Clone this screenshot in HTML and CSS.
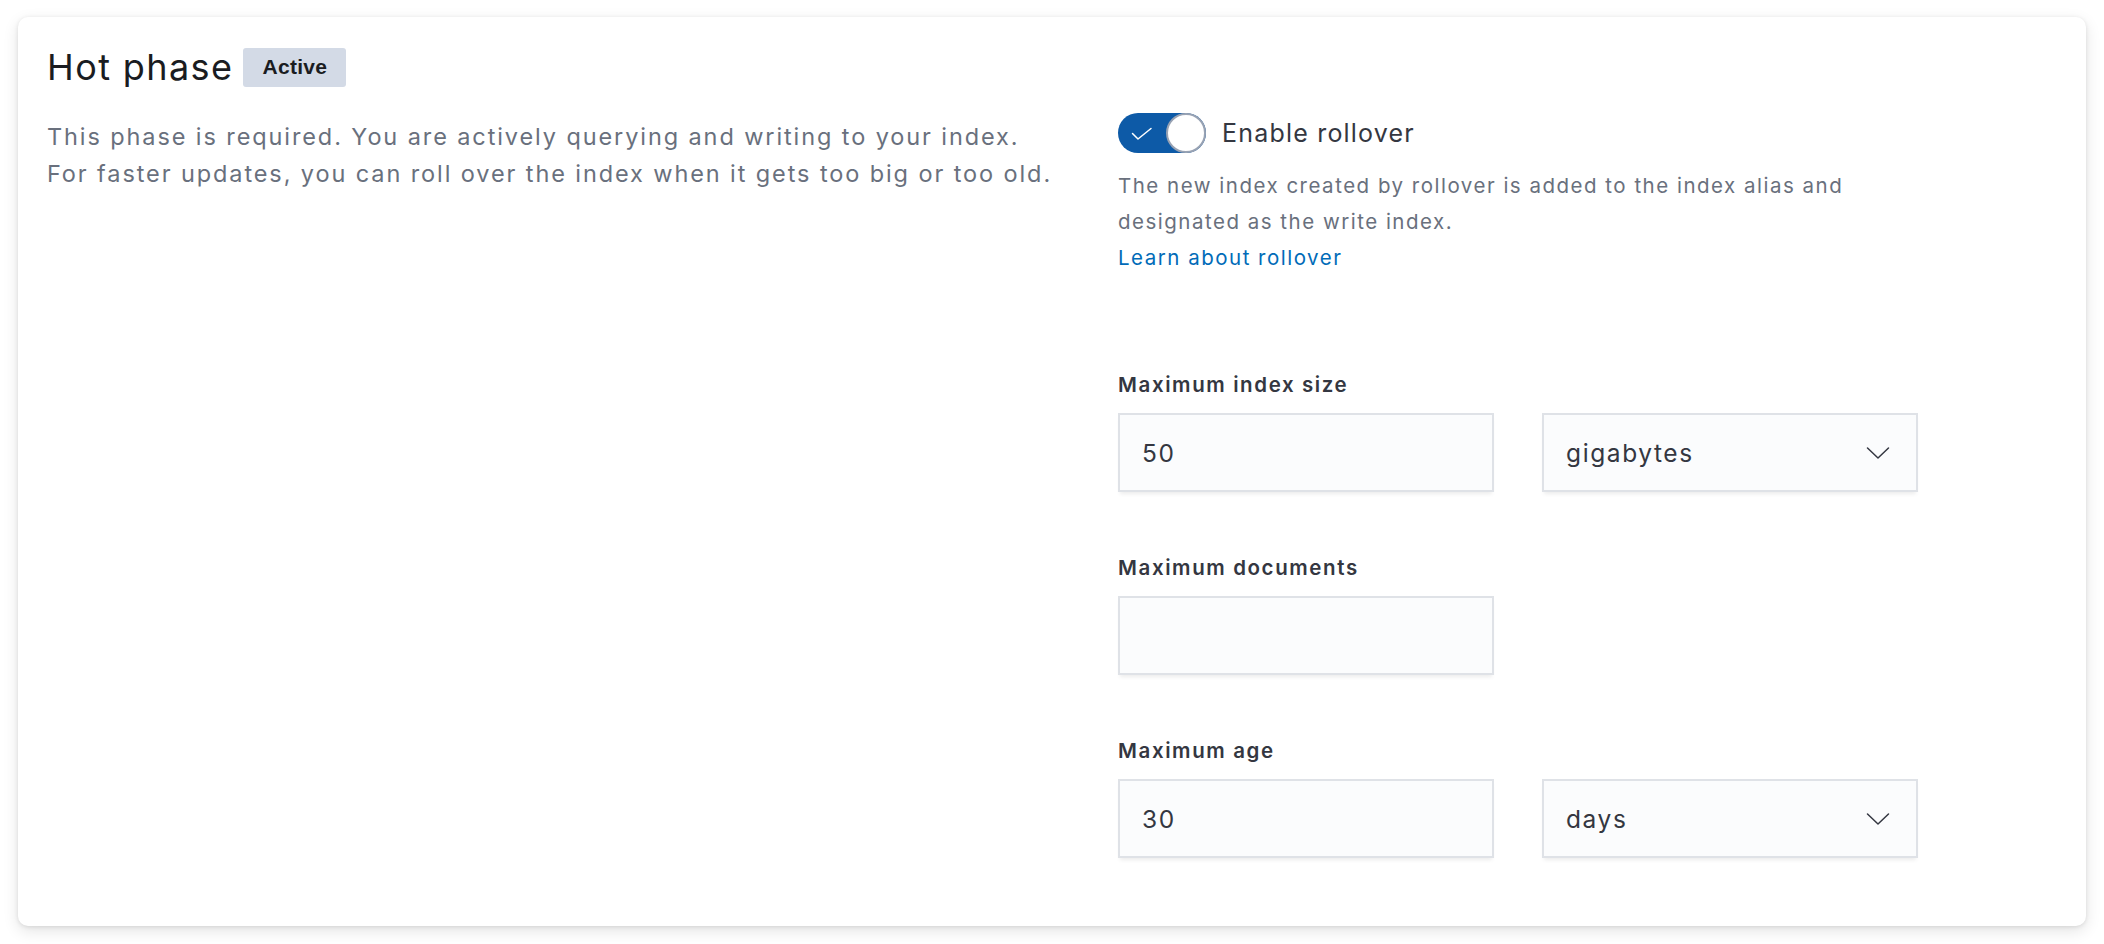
FILE: index.html
```html
<!DOCTYPE html>
<html lang="en">
<head>
<meta charset="utf-8">
<title>Hot phase</title>
<link rel="stylesheet" href="styles.css">
</head>
<body>
<div class="page">
  <section class="card">
    <header class="phase-header">
      <h2 class="phase-title">Hot phase</h2>
      <span class="badge">Active</span>
    </header>
    <div class="phase-body">
      <div class="phase-desc">
        <p>This phase is required. You are actively querying and writing to your index.<br>For faster updates, you can roll over the index when it gets too big or too old.</p>
      </div>
      <div class="phase-fields">
        <div class="switch-row">
          <span class="switch">
            <svg class="switch-check" width="22" height="14" viewBox="0 0 22 14"><path d="M1.5 6.5 L7 12 L20 1.5" fill="none" stroke="#fff" stroke-width="1.5" stroke-linecap="round" stroke-linejoin="round"/></svg>
            <span class="switch-knob"></span>
          </span>
          <span class="switch-label">Enable rollover</span>
        </div>
        <div class="help">
          <p>The new index created by rollover is added to the index alias and<br>designated as the write index.</p>
          <a class="help-link" href="#">Learn about rollover</a>
        </div>
        <div class="field">
          <label class="field-label">Maximum index size</label>
          <div class="field-row">
            <div class="input">50</div>
            <div class="input select"><span>gigabytes</span>
              <svg width="24" height="14" viewBox="0 0 24 14"><path d="M1.5 2 L12 12 L22.5 2" fill="none" stroke="#343741" stroke-width="1.5" stroke-linecap="round" stroke-linejoin="round"/></svg>
            </div>
          </div>
        </div>
        <div class="field">
          <label class="field-label">Maximum documents</label>
          <div class="field-row">
            <div class="input"></div>
          </div>
        </div>
        <div class="field">
          <label class="field-label">Maximum age</label>
          <div class="field-row">
            <div class="input">30</div>
            <div class="input select"><span>days</span>
              <svg width="24" height="14" viewBox="0 0 24 14"><path d="M1.5 2 L12 12 L22.5 2" fill="none" stroke="#343741" stroke-width="1.5" stroke-linecap="round" stroke-linejoin="round"/></svg>
            </div>
          </div>
        </div>
      </div>
    </div>
  </section>
</div>
</body>
</html>
```

FILE: styles.css
```css
* { box-sizing: border-box; }
html, body { margin: 0; padding: 0; background: #ffffff; }
body {
  font-family: Inter, "Noto Sans", sans-serif;
  color: #343741;
  width: 2104px;
  height: 944px;
  overflow: hidden;
}
.page {
  padding: 17px 18px 18px 18px;
}
.card {
  background: #fff;
  border-radius: 10px;
  box-shadow: 0 1px 4px rgba(0,0,0,0.10), 0 5px 16px rgba(0,0,0,0.11);
  height: 909px;
  padding: 27px 28px 0 29px;
}
.phase-header {
  display: flex;
  align-items: center;
  gap: 10px;
  height: 46px;
}
.phase-title {
  margin: 0;
  font-size: 36px;
  font-weight: 400;
  line-height: 46px;
  color: #1a1c21;
  letter-spacing: 1.4px;
}
.badge {
  display: inline-flex;
  align-items: center;
  justify-content: center;
  width: 103px;
  height: 39px;
  border-radius: 3px;
  background: #d3dae6;
  color: #1a1c21;
  font-family: "Liberation Sans", Arial, sans-serif;
  font-weight: 700;
  font-size: 21px;
  letter-spacing: 0.3px;
}
.phase-body {
  display: grid;
  grid-template-columns: 1040px 1fr;
  column-gap: 31px;
  margin-top: 23px;
}
.phase-desc p {
  margin: 5px 0 0 0;
  font-size: 23.5px;
  line-height: 37px;
  letter-spacing: 1.9px;
  color: #69707d;
  white-space: nowrap;
}
.phase-fields {
  display: flex;
  flex-direction: column;
}
.switch-row {
  display: flex;
  align-items: center;
  gap: 16px;
  height: 40px;
}
.switch {
  position: relative;
  display: inline-block;
  width: 88px;
  height: 40px;
  border-radius: 20px;
  background: #0d5aa7;
  flex: none;
}
.switch-check {
  position: absolute;
  left: 13px;
  top: 14px;
}
.switch-knob {
  position: absolute;
  right: 0;
  top: 0;
  width: 40px;
  height: 40px;
  border-radius: 50%;
  background: #fff;
  border: 2px solid #98a2b3;
}
.switch-label {
  font-size: 25px;
  letter-spacing: 1.2px;
  color: #343741;
}
.help {
  margin-top: 15px;
  font-size: 20.5px;
  line-height: 36px;
  letter-spacing: 1.5px;
  color: #69707d;
  white-space: nowrap;
}
.help p { margin: 0; }
.help-link {
  color: #006bb8;
  text-decoration: none;
  display: block;
}
.field { display: flex; flex-direction: column; }
.help + .field { margin-top: 95px; }
.field + .field { margin-top: 62px; }
.field-label {
  font-size: 20.5px;
  font-weight: 600;
  line-height: 28px;
  letter-spacing: 1.6px;
  color: #343741;
  margin-bottom: 14px;
}
.field-row {
  display: flex;
  gap: 48px;
}
.input {
  width: 376px;
  height: 79px;
  background: #fbfcfd;
  border: 2px solid #dfe2e7;
  box-shadow: 0 4px 4px -2px rgba(0,0,0,0.08);
  display: flex;
  align-items: center;
  padding: 0 22px;
  font-size: 24.5px;
  letter-spacing: 1.6px;
  color: #343741;
}
.select {
  justify-content: space-between;
  padding-right: 26px;
}
```
